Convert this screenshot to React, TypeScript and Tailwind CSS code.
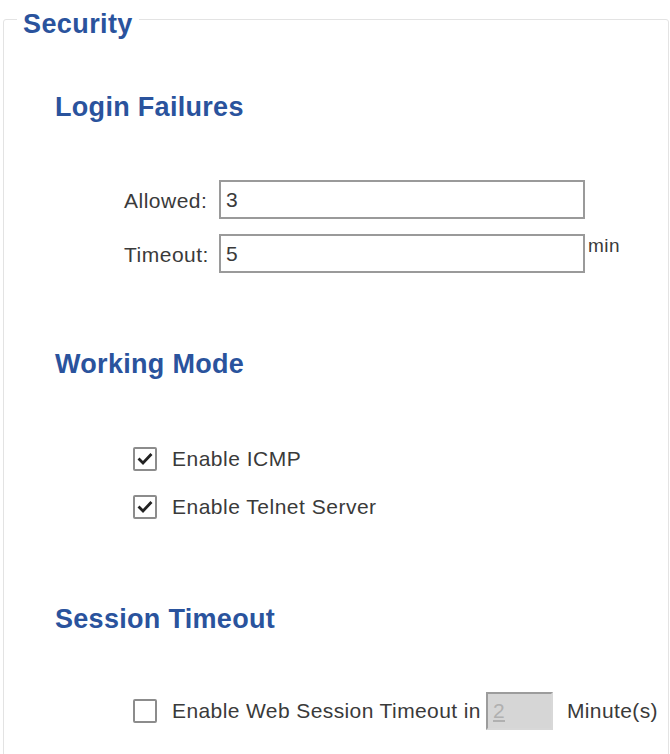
import React from 'react'

function Box({ checked }: { checked?: boolean }) {
  return (
    <div className="flex h-[24px] w-[24px] shrink-0 items-center justify-center rounded-[2px] border-2 border-[#8c8c8c] bg-white">
      {checked && (
        <svg width="16" height="16" viewBox="0 0 16 16" fill="none">
          <polyline points="2.5,8.5 6,12 13.5,4" stroke="#222" strokeWidth="2.8" strokeLinecap="square" />
        </svg>
      )}
    </div>
  )
}

function Heading({ children, className = '' }: { children: React.ReactNode; className?: string }) {
  return (
    <h2 className={`pl-[51px] text-[27px] font-bold leading-[32px] tracking-[0.3px] text-[#2a539d] ${className}`}>
      {children}
    </h2>
  )
}

export default function App() {
  return (
    <div className="h-[754px] w-[670px] overflow-hidden bg-white font-['Liberation_Sans',Arial,sans-serif] text-[#3a3a3a]">
      <fieldset className="-mt-[2px] ml-[3px] min-h-[820px] w-[666px] rounded-[3px] border border-[#e3e3e3] p-0">
        <legend className="ml-[13px] px-[6px] pt-[10px] text-[27px] font-bold leading-[32px] tracking-[0.4px] text-[#2a539d]">
          Security
        </legend>

        {/* Login failures */}
        <Heading className="mt-[51px]">Login Failures</Heading>
        <div className="mt-[57px] flex flex-col gap-[15px] pl-[120px] tracking-[0.5px]">
          <div className="flex h-[39px] items-center">
            <label className="w-[95px] pt-[3px] text-[21px] leading-[24px]">Allowed:</label>
            <input
              readOnly
              value="3"
              className="h-[39px] w-[366px] border-2 border-[#9a9a9a] bg-white px-[5px] text-[21px] text-[#3a3a3a] outline-none"
            />
          </div>
          <div className="flex h-[39px] items-center">
            <label className="w-[95px] pt-[3px] text-[21px] leading-[24px]">Timeout:</label>
            <input
              readOnly
              value="5"
              className="h-[39px] w-[366px] border-2 border-[#9a9a9a] bg-white px-[5px] text-[21px] text-[#3a3a3a] outline-none"
            />
            <span className="mt-px ml-[3px] self-start text-[19px] leading-[22px]">min</span>
          </div>
        </div>

        {/* Working mode */}
        <Heading className="mt-[75px]">Working Mode</Heading>
        <div className="mt-[67px] flex flex-col gap-[24px] pl-[129px] tracking-[0.5px]">
          <div className="flex h-[24px] items-center gap-[15px]">
            <Box checked />
            <span className="text-[21px] leading-[24px]">Enable ICMP</span>
          </div>
          <div className="flex h-[24px] items-center gap-[15px]">
            <Box checked />
            <span className="text-[21px] leading-[24px]">Enable Telnet Server</span>
          </div>
        </div>

        {/* Session timeout */}
        <Heading className="mt-[84px]">Session Timeout</Heading>
        <div className="mt-[57px] flex h-[38px] items-center pl-[129px] tracking-[0.4px]">
          <Box />
          <span className="ml-[15px] text-[21px] leading-[24px]">Enable Web Session Timeout in</span>
          <input
            readOnly
            disabled
            value="2"
            className="ml-[5px] h-[38px] w-[67px] border-2 border-t-[#9c9c9c] border-l-[#9c9c9c] border-r-[#d8d8d8] border-b-[#d8d8d8] bg-[#d6d6d6] px-[5px] text-[21px] text-[#b0b0b0] underline outline-none"
          />
          <span className="ml-[14px] text-[21px] leading-[24px]">Minute(s)</span>
        </div>
      </fieldset>
    </div>
  )
}
